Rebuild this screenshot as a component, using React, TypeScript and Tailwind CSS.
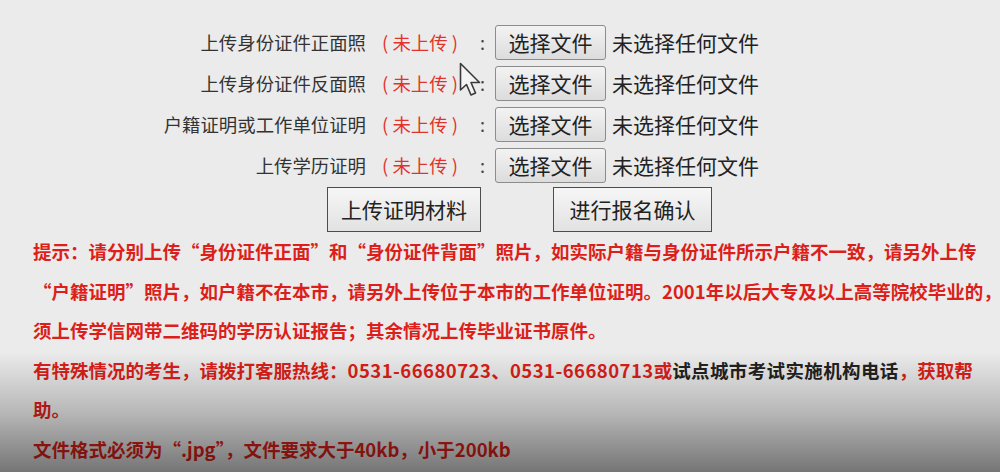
import React from "react";

const rows = [
  "上传身份证件正面照",
  "上传身份证件反面照",
  "户籍证明或工作单位证明",
  "上传学历证明",
];

function Cursor() {
  return (
    <svg
      className="pointer-events-none absolute left-[459px] top-[62px]"
      width="26"
      height="36"
      viewBox="0 0 26 36"
    >
      <path
        d="M1.5 1.5 L1.5 28 L7.5 22.5 L12 33 L16.5 31 L12 20.5 L20.5 20.5 Z"
        fill="#f4f4f4"
        stroke="#3a3a3a"
        strokeWidth="1.6"
        strokeLinejoin="round"
      />
    </svg>
  );
}

function FileRow({ label }: { label: string }) {
  return (
    <div className="flex h-[35px] items-center">
      <div className="w-[366px] text-right text-[18.4px] text-[#333]">{label}</div>
      <div className="ml-[16px] flex w-[76px] justify-between text-[18.4px] text-[#e2332b]">
        <span>(</span>
        <span>未上传</span>
        <span>)</span>
      </div>
      <div className="w-[37px] pl-[22px] text-[18px] text-[#444]">:</div>
      <button className="h-[35px] w-[111px] rounded-[3px] border border-[#8c8c8c] bg-linear-to-b from-[#f3f3f3] to-[#dcdcdc] text-[21px] text-[#222]">
        选择文件
      </button>
      <span className="ml-[6px] text-[21px] text-[#222]">未选择任何文件</span>
    </div>
  );
}

export default function App() {
  return (
    <div className="relative h-[472px] w-[1000px] overflow-hidden bg-[#ebebeb] font-['Noto_Sans_CJK_SC',sans-serif]">
      <div className="flex flex-col gap-[6px] pt-[25px]">
        {rows.map((r) => (
          <FileRow key={r} label={r} />
        ))}
      </div>

      <div className="mt-[4px] flex gap-[72px] pl-[327px]">
        <button className="h-[45px] w-[154px] border border-[#4d4d4d] bg-linear-to-b from-[#f6f6f6] to-[#e2e2e2] text-[21px] text-[#222]">
          上传证明材料
        </button>
        <button className="h-[45px] w-[159px] border border-[#4d4d4d] bg-linear-to-b from-[#f6f6f6] to-[#e2e2e2] text-[21px] text-[#222]">
          进行报名确认
        </button>
      </div>

      <div className="whitespace-nowrap pl-[33px] text-[18.5px] font-bold leading-[39.5px] text-[#dc1f1a]">
        <div>提示：请分别上传“身份证件正面”和“身份证件背面”照片，如实际户籍与身份证件所示户籍不一致，请另外上传</div>
        <div>“户籍证明”照片，如户籍不在本市，请另外上传位于本市的工作单位证明。2001年以后大专及以上高等院校毕业的，</div>
        <div>须上传学信网带二维码的学历认证报告；其余情况上传毕业证书原件。</div>
        <div>
          有特殊情况的考生，请拨打客服热线：
          <span className="tracking-[0.025em]">0531-66680723</span>、
          <span className="tracking-[0.025em]">0531-66680713</span>或
          <span className="tracking-[0.02em] text-[#222]">试点城市考试实施机构电话</span>，获取帮
        </div>
        <div>助。</div>
        <div>文件格式必须为“.jpg”，文件要求大于40kb，小于200kb</div>
      </div>

      <Cursor />
      <div className="pointer-events-none absolute inset-x-0 bottom-0 h-[120px] bg-linear-to-b from-transparent via-[rgba(0,0,0,0.22)] to-[rgba(0,0,0,0.5)]" />
    </div>
  );
}
